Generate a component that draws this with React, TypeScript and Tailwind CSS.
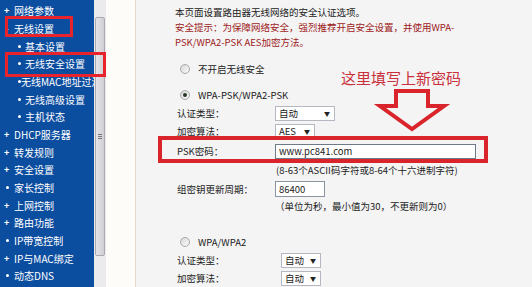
const menu: { t: string; m: "plus" | "minus" | "sub" | "dot" }[] = [
  { t: "网络参数", m: "plus" },
  { t: "无线设置", m: "minus" },
  { t: "基本设置", m: "sub" },
  { t: "无线安全设置", m: "sub" },
  { t: "无线MAC地址过滤", m: "sub" },
  { t: "无线高级设置", m: "sub" },
  { t: "主机状态", m: "sub" },
  { t: "DHCP服务器", m: "plus" },
  { t: "转发规则", m: "plus" },
  { t: "安全设置", m: "plus" },
  { t: "家长控制", m: "dot" },
  { t: "上网控制", m: "plus" },
  { t: "路由功能", m: "plus" },
  { t: "IP带宽控制", m: "dot" },
  { t: "IP与MAC绑定", m: "plus" },
  { t: "动态DNS", m: "dot" },
];

function Marker({ m }: { m: string }) {
  if (m === "plus")
    return <span className="w-[14px] pl-[4px] text-[9px] font-bold leading-none">+</span>;
  if (m === "minus")
    return <span className="w-[14px] pl-[5px] text-[10px] font-bold leading-none">-</span>;
  if (m === "dot")
    return (
      <span className="flex w-[14px] pl-[6px]">
        <span className="h-[3px] w-[3px] rounded-full bg-white" />
      </span>
    );
  return (
    <span className="flex w-[25px] pl-[18px]">
      <span className="h-[3px] w-[3px] rounded-full bg-white" />
    </span>
  );
}

function Radio({ checked }: { checked?: boolean }) {
  return (
    <span className="flex h-[10px] w-[10px] items-center justify-center rounded-full border border-[#a8a8a8] bg-gradient-to-br from-[#d8d8d8] to-[#fafafa]">
      {checked && <span className="h-[4px] w-[4px] rounded-full bg-[#2a3a2a]" />}
    </span>
  );
}

function Select({ label, w, h = "h-[15px]" }: { label: string; w: string; h?: string }) {
  return (
    <div className={`flex ${w} ${h} items-center justify-between border border-[#b5b8c0] bg-white pl-[3px] pr-[4px]`}>
      <span>{label}</span>
      <span className="text-[6px] text-[#222]">▼</span>
    </div>
  );
}

function Row({ label, h, children }: { label: string; h: string; children: React.ReactNode }) {
  return (
    <div className={`flex ${h} items-center pl-[41px]`}>
      <span className="w-[98px]">{label}</span>
      {children}
    </div>
  );
}

export default function App() {
  return (
    <div className="relative flex h-[287px] w-[532px] overflow-hidden font-['Noto_Sans_CJK_SC',sans-serif] text-[9.5px] text-[#222]">
      {/* sidebar */}
      <div className="w-[94px] shrink-0 overflow-hidden bg-[#0b4d9f] pt-[2px] text-white">
        {menu.map((it) => (
          <div key={it.t} className="flex h-[17.67px] items-center whitespace-nowrap text-[10px]">
            <Marker m={it.m} />
            <span>{it.t}</span>
          </div>
        ))}
      </div>

      {/* scrollbar */}
      <div className="flex w-[12px] shrink-0 flex-col bg-[#ebebee] pt-[17px]">
        <div className="mx-[1px] flex h-[239px] items-center justify-center rounded-[2px] border border-[#a9a9b1] bg-gradient-to-r from-[#e4e4e8] to-[#cfcfd5]">
          <div className="flex flex-col gap-[1px]">
            <span className="h-px w-[4px] bg-[#777]" />
            <span className="h-px w-[4px] bg-[#777]" />
            <span className="h-px w-[4px] bg-[#777]" />
          </div>
        </div>
      </div>

      {/* gutter */}
      <div className="w-[30px] shrink-0 border-r border-[#e3dacb] bg-[#fdfcf8]" />

      {/* main */}
      <div className="flex-1 bg-[#f4f4f4]">
        <div className="pl-[39px] pt-[5px] leading-[15px]">
          <div>本页面设置路由器无线网络的安全认证选项。</div>
          <div className="text-[#9e1b1b]">安全提示：为保障网络安全，强烈推荐开启安全设置，并使用WPA-</div>
          <div className="text-[#9e1b1b]">PSK/WPA2-PSK AES加密方法。</div>
        </div>

        <div className="mt-[10px] flex h-[18px] items-center gap-[8px] pl-[44px]">
          <Radio />
          <span>不开启无线安全</span>
        </div>
        <div className="mt-[8px] flex h-[18px] items-center gap-[8px] pl-[44px]">
          <Radio checked />
          <span>WPA-PSK/WPA2-PSK</span>
        </div>

        <Row label="认证类型：" h="h-[18px]">
          <Select label="自动" w="w-[60px]" />
        </Row>
        <Row label="加密算法：" h="h-[19px]">
          <Select label="AES" w="w-[40px]" />
        </Row>
        <Row label="PSK密码：" h="h-[20px]">
          <div className="flex h-[15px] w-[201px] items-center border border-[#6f7a88] bg-white pl-[3px]">
            www.pc841.com
          </div>
        </Row>
        <div className="flex h-[18px] items-center pl-[140px]">(8-63个ASCII码字符或8-64个十六进制字符)</div>
        <Row label="组密钥更新周期：" h="h-[20px]">
          <div className="flex h-[16px] w-[50px] items-center border border-[#8a93a0] bg-white pl-[3px]">86400</div>
        </Row>
        <div className="flex h-[15px] items-center pl-[139px]">（单位为秒，最小值为30，不更新则为0）</div>

        <div className="mt-[19px] flex h-[18px] items-center gap-[8px] pl-[44px]">
          <Radio />
          <span>WPA/WPA2</span>
        </div>
        <Row label="认证类型：" h="h-[18px]">
          <div className="ml-[6px]">
            <Select label="自动" w="w-[40px]" />
          </div>
        </Row>
        <Row label="加密算法：" h="h-[18px]">
          <div className="ml-[6px]">
            <Select label="自动" w="w-[40px]" />
          </div>
        </Row>
      </div>

      {/* annotations */}
      <div className="absolute left-[5px] top-[16px] h-[21px] w-[68px] border-[3px] border-[#e8232b]" />
      <div className="absolute left-[5px] top-[52px] h-[25px] w-[101px] border-[3px] border-[#e8232b]" />
      <div className="absolute left-[158px] top-[136px] h-[27px] w-[330px] border-[4px] border-[#d9242b]" />
      <div className="absolute left-[341px] top-[68px] text-[15px] leading-[20px] text-[#c9303a]">这里填写上新密码</div>
      <svg className="absolute left-0 top-0" width="532" height="287">
        <polygon
          points="396,91 428,91 428,106 444,106 412,129 380,106 396,106"
          fill="none"
          stroke="#d9242b"
          strokeWidth="4"
          strokeLinejoin="miter"
        />
      </svg>
    </div>
  );
}
